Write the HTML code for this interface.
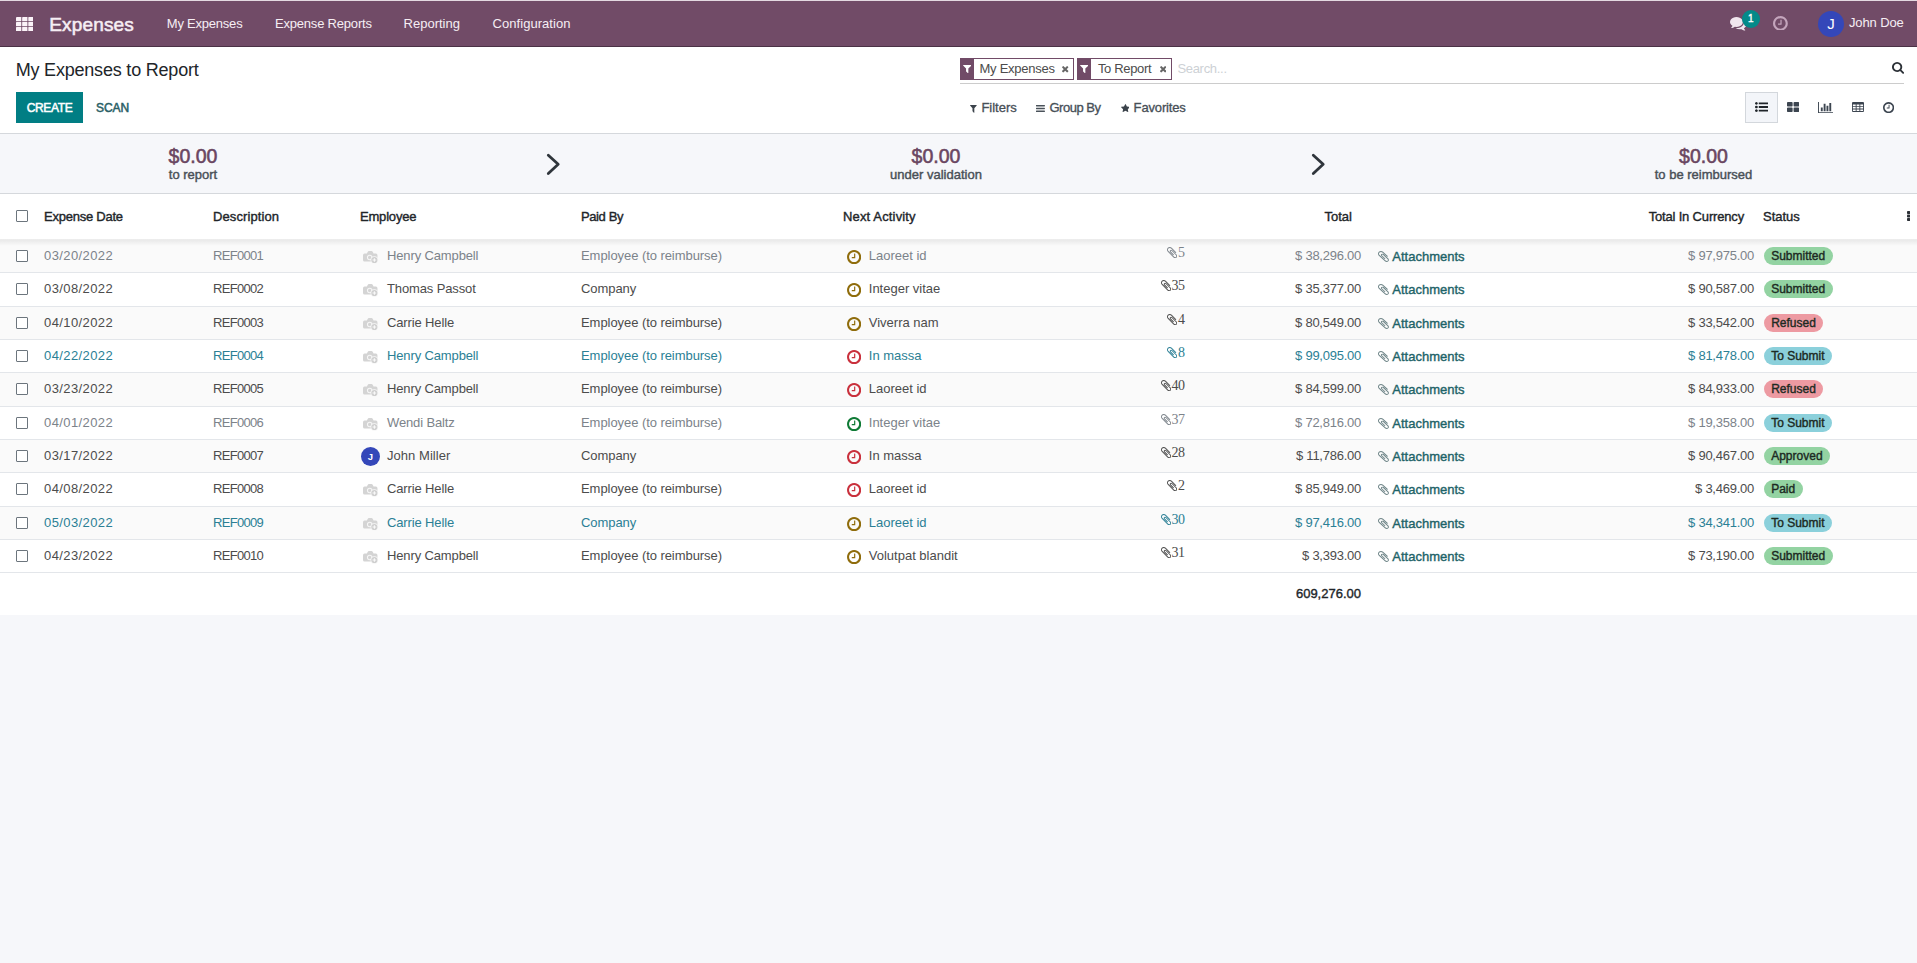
<!DOCTYPE html>
<html lang="en">
<head>
<meta charset="utf-8">
<title>Odoo - My Expenses to Report</title>
<style>
*{box-sizing:border-box;margin:0;padding:0}
html,body{width:1917px;height:963px;overflow:hidden}
body{font-family:"Liberation Sans",sans-serif;font-size:13px;line-height:20px;color:#4c4c4c;background:#f6f7fa;position:relative}
a{text-decoration:none;color:inherit}
.ic{display:inline-block;vertical-align:middle}
b{font-weight:normal}
.md,th,.att,.badge,.lbl,.amt,.opt b,.buttons button,.brand,.f-tot,.nbadge{font-weight:normal;-webkit-text-stroke:.38px currentColor}
.buttons button{-webkit-text-stroke:.5px currentColor}

/* ---------- navbar ---------- */
.navbar{position:absolute;left:0;top:0;width:1917px;height:47px;z-index:2;background:#714b67;box-shadow:inset 0 1px 0 #e4d9e1,inset 0 -1px 0 #4b3246;color:#f6eef4}
.navbar a{position:absolute;white-space:nowrap}
.apps{left:15.7px;top:16.7px;line-height:0}
.brand{left:49.2px;top:12px;font-size:19px;line-height:26px;-webkit-text-stroke:.55px currentColor;letter-spacing:.17px}
.menu a{top:14px;line-height:20px;font-size:13px}
.m1{left:166.8px;letter-spacing:-.22px}.m2{left:275px;letter-spacing:-.2px}.m3{left:403.6px}.m4{left:492.6px;letter-spacing:.04px}
.chat{left:1730px;top:17px;line-height:0}
.nbadge{position:absolute;left:11.7px;top:-7.2px;width:18.4px;height:18.4px;border-radius:9.2px;background:#048a89;color:#fff;font-size:10px;line-height:17.4px;text-align:center}
.act{left:1773.1px;top:15.7px;line-height:0}
.user{left:1818px;top:0;height:46px}
.uav{position:absolute;left:0;top:11px;width:26px;height:26px;border-radius:13px;background:#3447b9;color:#fff;font-size:15px;line-height:26px;text-align:center}
.uname{position:absolute;left:31px;top:13px;line-height:20px;font-size:13px;letter-spacing:-.13px}

/* ---------- control panel ---------- */
.cp{position:absolute;left:0;top:46px;width:1917px;height:88px;background:#fff;border-bottom:1px solid #d5d8dc}
.title{position:absolute;left:15.7px;top:12px;font-size:18px;line-height:24px;font-weight:normal;color:#212529;white-space:nowrap;letter-spacing:-.2px}
.searchbar{position:absolute;left:960px;top:10px;width:944px;height:28px;border-bottom:1px solid #cccccc}
.facet{position:absolute;top:2px;height:22px;border:1px solid #714b67;background:#fff;color:#4c4c4c;white-space:nowrap}
.f1{left:0;width:114px}.f2{left:117.2px;width:94.6px}
.fic{position:absolute;left:-1px;top:-1px;width:13.6px;height:22px;background:#714b67;line-height:0}
.fic svg{position:absolute;left:2.8px;top:7.4px}
.fv{position:absolute;left:18.5px;top:0;line-height:20px;font-size:13px;letter-spacing:-.26px}
.f2 .fv{left:19.7px;letter-spacing:-.34px}
.fx{position:absolute;right:4.5px;top:7.4px}
.ph{position:absolute;left:217.4px;top:3px;line-height:20px;color:#cdd1d5;font-size:13px;letter-spacing:-.3px}
.sico{position:absolute;left:932px;top:6.2px;line-height:0}
.buttons{position:absolute;left:16px;top:46px;white-space:nowrap}
.buttons button{font-family:inherit;font-size:12px;border:0;height:30.6px;line-height:28.6px;padding-top:2px;letter-spacing:-.35px;vertical-align:top;cursor:pointer}
.btn-primary{width:67px;background:#017e84;color:#fff}
.btn-link{margin-left:9.4px;background:none;color:#2a5f66;padding:2px 0 0 0;letter-spacing:-.1px!important}
.options{position:absolute;left:960px;top:51px;height:20px;white-space:nowrap;color:#343a40}
.opt{position:absolute;top:0;line-height:20px;height:20px}
.opt .oi{position:absolute;left:0}
.opt b{position:absolute;top:1px;color:#474f57;font-size:13px;-webkit-text-stroke:.32px currentColor}
.o1{left:10.4px}.o1 .oi{top:7.8px}.o1 b{left:11px}
.o2{left:76.3px}.o2 .oi{top:8px}.o2 b{left:13.2px;letter-spacing:-.5px}
.o3{left:160.6px}.o3 .oi{top:7.3px}.o3 b{left:13px;letter-spacing:-.15px}
.switcher{position:absolute;left:1745px;top:46px;height:31px}
.vb{position:absolute;top:0;width:33px;height:30.6px;line-height:0;border:1px solid transparent}
.vb svg{position:absolute}
.vb.active{background:#f3f5f9;border-color:#d3d7dc}
.v1{left:0}.v1 svg{left:8.9px;top:9.2px}
.v2{left:32px}.v2 svg{left:8.9px;top:9px}
.v3{left:64px}.v3 svg{left:7.8px;top:8.7px}
.v4{left:96px}.v4 svg{left:10px;top:9.2px}
.v5{left:127px}.v5 svg{left:9.9px;top:9px}

/* ---------- dashboard ---------- */
.dash{position:absolute;left:0;top:134px;width:1917px;height:60px;background:#f6f7fa;border-bottom:1px solid #d5d8dc}
.card{position:absolute;top:0;width:300px;text-align:center}
.card span{display:block;white-space:nowrap}
.amt{font-size:19.5px;line-height:24px;margin-top:10px;color:#6a4661;-webkit-text-stroke:.55px currentColor}
.lbl{font-size:13px;line-height:16px;margin-top:-1px;color:#495057;-webkit-text-stroke:.42px currentColor}
.d1{left:43px}.d2{left:786px}.d3{left:1553.5px}
.chev{position:absolute;top:19px}
.ch1{left:546px}.ch2{left:1311px}

/* ---------- list ---------- */
.list{position:absolute;left:0;top:194px;width:1917px;background:#fff}
table{border-collapse:separate;border-spacing:0;table-layout:fixed;width:1917px}
th,td{padding:0 4px;white-space:nowrap;overflow:hidden;text-align:left;vertical-align:middle;font-weight:normal}
thead tr{height:46px}
thead th{height:46px;padding-bottom:1px}
th{color:#212529;font-size:13px}
th.r{text-align:right;padding-right:14px}
th.h-cur{padding-right:15px}
.h-date{letter-spacing:-.24px}.h-ref{letter-spacing:.1px}.h-emp{letter-spacing:-.19px}.h-paid{letter-spacing:-.4px}.h-act{letter-spacing:.15px}.h-cur{letter-spacing:-.17px}
tbody tr{height:33px}
tbody tr:nth-child(3n+2){height:34px}
tbody tr:nth-child(3n+2) td{height:34px}
tbody tr:nth-child(odd){background:#fafafa}
tbody td{height:33px;line-height:20px;padding-top:6px;vertical-align:top;border-bottom:1px solid #e3e6ea}
tr.muted{color:#7c838a}
tr.info{color:#2b7f95}
.c-sel{padding-left:16px}
tbody .c-sel{padding-top:9px}
.cb{display:block;width:12px;height:12px;border:1px solid #6c757d;background:#fff;border-radius:1px;position:relative;top:1px}
thead .cb{top:-1px}
.c-date{letter-spacing:.4px}
.c-ref{letter-spacing:-.68px}
.c-emp{letter-spacing:-.13px}
.c-paid{letter-spacing:-.06px}
.cam{vertical-align:top;margin:5px 8.500px 0 3px}
.av{display:inline-block;vertical-align:top;width:19px;height:19px;border-radius:10px;background:#3447b9;color:#fff;font-size:9.5px;font-weight:bold;line-height:19px;text-align:center;margin:1px 7px 0 1px;letter-spacing:0}
.av+.nm{letter-spacing:.05px}
.nm{vertical-align:baseline}
.aclk{vertical-align:top;margin:3.8px 7.7px 0 3.9px}
.an{vertical-align:baseline}
.c-cnt{text-align:right;padding-right:4.8px;vertical-align:top}
tbody td.c-cnt{padding-top:0}
.cnt{display:inline-block;font-family:"Liberation Serif",serif;font-size:14px;line-height:14px;margin-top:5.6px;color:inherit;letter-spacing:-.7px}
.cnt svg{vertical-align:top;margin-top:1.4px;margin-right:.5px}
.c-tot,.c-cur{text-align:right;padding-right:5px;letter-spacing:-.25px}
.c-att{padding-left:12px}
.attb{display:inline-block;position:relative;top:1px}
.clip2{vertical-align:top;margin:4px 3.4px 0 0}
.att{vertical-align:baseline;color:#1d6368}
.c-st{padding-left:5px}
tbody td.c-st{padding-top:5px}
.badge{display:inline-block;height:18px;line-height:18px;border-radius:9px;padding:0 7.4px 0 7.2px;font-size:12px;color:#1c2a22;vertical-align:middle}
.b-ok{background:#93d3a2}
.b-no{background:#ed9aa2}
.b-info{background:#8bd0db}
.kebab{display:block;margin-left:3px;line-height:0;position:relative;top:-.7px}
tfoot tr{height:42px}
.f-tot{text-align:right;padding-right:5px;color:#212529;letter-spacing:0}
.hshadow{position:absolute;left:0;top:45px;width:1917px;height:7px;background:linear-gradient(to bottom,rgba(0,0,0,.08),rgba(0,0,0,0));pointer-events:none}

</style>
</head>
<body>
<header class="navbar">
  <a class="apps"><svg viewBox="0 0 17.600 14.400" width="17.600" height="14.400"><g fill="#fbf3f8"><rect x="0" y="0" width="5.300" height="4.300" rx=".5"/><rect x="6.15" y="0" width="5.300" height="4.300" rx=".5"/><rect x="12.3" y="0" width="5.300" height="4.300" rx=".5"/><rect x="0" y="5.05" width="5.300" height="4.300" rx=".5"/><rect x="6.15" y="5.05" width="5.300" height="4.300" rx=".5"/><rect x="12.3" y="5.05" width="5.300" height="4.300" rx=".5"/><rect x="0" y="10.1" width="5.300" height="4.300" rx=".5"/><rect x="6.15" y="10.1" width="5.300" height="4.300" rx=".5"/><rect x="12.3" y="10.1" width="5.300" height="4.300" rx=".5"/></g></svg></a>
  <a class="brand">Expenses</a>
  <nav class="menu">
    <a class="m1">My Expenses</a>
    <a class="m2">Expense Reports</a>
    <a class="m3">Reporting</a>
    <a class="m4">Configuration</a>
  </nav>
  <div class="systray">
    <a class="chat"><svg class="ic" viewBox="0 256 1792 1408.11" width="16.4" height="13.60" preserveAspectRatio="none"><path fill="#f1e6ee" d="M1408 768q0 139-94 257t-256.500 186.500-353.500 68.500q-86 0-176-16-124 88-278 128-36 9-86 16h-3q-11 0-20.500-8t-11.500-21q-1-3-1-6.500t.5-6.500 2-6l2.500-5t3.500-5.500 4-5 4.500-5 4-4.500q5-6 23-25t26-29.500 22.500-29 25-38.500 20.500-44q-124-72-195-177t-71-224q0-139 94-257t256.500-186.500 353.500-68.500 353.500 68.500 256.500 186.500 94 257zm384 256q0 120-71 224.500t-195 176.500q10 24 20.500 44t25 38.500 22.500 29 26 29.500 23 25q1 1 4 4.500t4.500 5 4 5 3.500 5.500l2.500 5t2 6 .5 6.500-1 6.500q-3 14-13 22t-22 7q-50-7-86-16-154-40-278-128-90 16-176 16-271 0-472-132 58 4 88 4 161 0 309-45t264-129q125-92 192-212t67-254q0-77-23-152 129 71 204 178t75 230z"/></svg><span class="nbadge">1</span></a>
    <a class="act"><svg class="ic" viewBox="128 128 1536 1536" width="14.8" height="14.80" preserveAspectRatio="none"><path fill="#c4a5bc" d="M1024 544v448q0 14-9 23t-23 9h-320q-14 0-23-9t-9-23v-64q0-14 9-23t23-9h224v-352q0-14 9-23t23-9h64q14 0 23 9t9 23zm416 352q0-148-73-273t-198-198-273-73-273 73-198 198-73 273 73 273 198 198 273 73 273-73 198-198 73-273zm224 0q0 209-103 385.500t-279.500 279.500-385.500 103-385.500-103-279.500-279.500-103-385.500 103-385.500 279.500-279.500 385.500-103 385.500 103 279.500 279.500 103 385.500z"/></svg></a>
    <a class="user"><span class="uav">J</span><span class="uname">John Doe</span></a>
  </div>
</header>

<section class="cp">
  <h1 class="title">My Expenses to Report</h1>
  <div class="searchbar">
    <div class="facet f1"><span class="fic"><svg class="ic" viewBox="190.979 256 1410.04 1408" width="8.4" height="8.00" preserveAspectRatio="none"><path fill="#ffffff" d="M1595 295q17 41-14 70l-493 493v742q0 42-39 59-13 5-25 5-27 0-45-19l-256-256q-19-19-19-45v-486l-493-493q-31-29-14-70 17-39 59-39h1280q42 0 59 39z"/></svg></span><span class="fv">My Expenses</span><svg class="fx" viewBox="302 366 1188 1188" width="6.4" height="6.40" preserveAspectRatio="none"><path fill="#666666" d="M1490 1322q0 40-28 68l-136 136q-28 28-68 28t-68-28l-294-294-294 294q-28 28-68 28t-68-28l-136-136q-28-28-28-68t28-68l294-294-294-294q-28-28-28-68t28-68l136-136q28-28 68-28t68 28l294 294 294-294q28-28 68-28t68 28l136 136q28 28 28 68t-28 68l-294 294 294 294q28 28 28 68z"/></svg></div>
    <div class="facet f2"><span class="fic"><svg class="ic" viewBox="190.979 256 1410.04 1408" width="8.4" height="8.00" preserveAspectRatio="none"><path fill="#ffffff" d="M1595 295q17 41-14 70l-493 493v742q0 42-39 59-13 5-25 5-27 0-45-19l-256-256q-19-19-19-45v-486l-493-493q-31-29-14-70 17-39 59-39h1280q42 0 59 39z"/></svg></span><span class="fv">To Report</span><svg class="fx" viewBox="302 366 1188 1188" width="6.4" height="6.40" preserveAspectRatio="none"><path fill="#666666" d="M1490 1322q0 40-28 68l-136 136q-28 28-68 28t-68-28l-294-294-294 294q-28 28-68 28t-68-28l-136-136q-28-28-28-68t28-68l294-294-294-294q-28-28-28-68t28-68l136-136q28-28 68-28t68 28l294 294 294-294q28-28 68-28t68 28l136 136q28 28 28 68t-28 68l-294 294 294 294q28 28 28 68z"/></svg></div>
    <span class="ph">Search...</span>
    <span class="sico"><svg class="ic" viewBox="64 128 1664 1664" width="12.1" height="11.80" preserveAspectRatio="none"><path fill="#2b3036" d="M1216 832q0-185-131.500-316.500t-316.500-131.500-316.500 131.500-131.500 316.500 131.500 316.500 316.500 131.500 316.500-131.500 131.500-316.500zm512 832q0 52-38 90t-90 38q-54 0-90-38l-343-342q-179 124-399 124-143 0-273.500-55.500t-225-150-150-225-55.500-273.500 55.500-273.500 150-225 225-150 273.500-55.500 273.500 55.500 225 150 150 225 55.500 273.500q0 220-124 399l343 343q37 37 37 90z"/></svg></span>
  </div>
  <div class="buttons">
    <button class="btn-primary">CREATE</button>
    <button class="btn-link">SCAN</button>
  </div>
  <div class="options">
    <span class="opt o1"><svg class="oi" viewBox="190.979 256 1410.04 1408" width="6.8" height="7.80" preserveAspectRatio="none"><path fill="#3b434b" d="M1595 295q17 41-14 70l-493 493v742q0 42-39 59-13 5-25 5-27 0-45-19l-256-256q-19-19-19-45v-486l-493-493q-31-29-14-70 17-39 59-39h1280q42 0 59 39z"/></svg><b>Filters</b></span>
    <span class="opt o2"><svg class="oi" viewBox="128 256 1536 1280" width="8.9" height="7.00" preserveAspectRatio="none"><path fill="#4a525a" d="M1664 1344v128q0 26-19 45t-45 19h-1408q-26 0-45-19t-19-45v-128q0-26 19-45t45-19h1408q26 0 45 19t19 45zm0-512v128q0 26-19 45t-45 19h-1408q-26 0-45-19t-19-45v-128q0-26 19-45t45-19h1408q26 0 45 19t19 45zm0-512v128q0 26-19 45t-45 19h-1408q-26 0-45-19t-19-45v-128q0-26 19-45t45-19h1408q26 0 45 19t19 45z"/></svg><b>Group By</b></span>
    <span class="opt o3"><svg class="oi" viewBox="64 32 1664 1587" width="8.9" height="8.00" preserveAspectRatio="none"><path fill="#3b434b" d="M1728 647q0 22-26 48l-363 354 86 500q1 7 1 20 0 21-10.500 35.500t-30.500 14.500q-19 0-40-12l-449-236-449 236q-22 12-40 12-21 0-31.500-14.500t-10.500-35.500q0-6 2-20l86-500-364-354q-25-27-25-48 0-37 56-46l502-73 225-455q19-41 49-41t49 41l225 455 502 73q56 9 56 46z"/></svg><b>Favorites</b></span>
  </div>
  <div class="switcher">
    <span class="vb active v1"><svg class="ic" viewBox="0 192 1792 1408" width="13.1" height="10.00" preserveAspectRatio="none"><path fill="#1f2429" d="M384 1408q0 80-56 136t-136 56-136-56-56-136 56-136 136-56 136 56 56 136zm0-512q0 80-56 136t-136 56-136-56-56-136 56-136 136-56 136 56 56 136zm1408 416v192q0 13-9.500 22.500t-22.500 9.500h-1216q-13 0-22.500-9.500t-9.500-22.500v-192q0-13 9.500-22.500t22.500-9.500h1216q13 0 22.500 9.500t9.500 22.500zm-1408-928q0 80-56 136t-136 56-136-56-56-136 56-136 136-56 136 56 56 136zm1408 416v192q0 13-9.500 22.500t-22.500 9.500h-1216q-13 0-22.500-9.500t-9.500-22.500v-192q0-13 9.500-22.500t22.500-9.500h1216q13 0 22.500 9.500t9.500 22.500zm0-512v192q0 13-9.500 22.500t-22.500 9.500h-1216q-13 0-22.500-9.500t-9.500-22.500v-192q0-13 9.500-22.500t22.500-9.500h1216q13 0 22.500 9.500t9.500 22.500z"/></svg></span>
    <span class="vb v2"><svg class="ic" viewBox="64 128 1664 1408" width="12.2" height="10.10" preserveAspectRatio="none"><path fill="#3c4550" d="M832 1024v384q0 52-38 90t-90 38h-512q-52 0-90-38t-38-90v-384q0-52 38-90t90-38h512q52 0 90 38t38 90zm0-768v384q0 52-38 90t-90 38h-512q-52 0-90-38t-38-90v-384q0-52 38-90t90-38h512q52 0 90 38t38 90zm896 768v384q0 52-38 90t-90 38h-512q-52 0-90-38t-38-90v-384q0-52 38-90t90-38h512q52 0 90 38t38 90zm0-768v384q0 52-38 90t-90 38h-512q-52 0-90-38t-38-90v-384q0-52 38-90t90-38h512q52 0 90 38t38 90z"/></svg></span>
    <span class="vb v3"><svg class="ic" viewBox="0 128 2048 1536" width="15.1" height="11.20" preserveAspectRatio="none"><path fill="#3c4550" d="M640 896v512h-256v-512h256zm384-512v1024h-256v-1024h256zm1024 1152v128h-2048v-1536h128v1408h1920zm-640-896v768h-256v-768h256zm384-384v1152h-256v-1152h256z"/></svg></span>
    <span class="vb v4"><svg class="ic" viewBox="0 0 12 10" width="12" height="10"><path fill="#3c4550" fill-rule="evenodd" d="M1 0h10q1 0 1 1v8q0 1-1 1H1q-1 0-1-1V1q0-1 1-1zM.9 2.600v1.600h2.800V2.600zm3.700 0v1.600h2.800V2.600zm3.700 0v1.600h2.800V2.600zM.9 5v1.600h2.800V5zm3.700 0v1.600h2.800V5zm3.700 0v1.600h2.800V5zM.9 7.400V9h2.800V7.400zm3.700 0V9h2.800V7.400zm3.700 0V9h2.800V7.400z"/></svg></span>
    <span class="vb v5"><svg class="ic" viewBox="128 128 1536 1536" width="11.2" height="11.20" preserveAspectRatio="none"><path fill="#3c4550" d="M1024 544v448q0 14-9 23t-23 9h-320q-14 0-23-9t-9-23v-64q0-14 9-23t23-9h224v-352q0-14 9-23t23-9h64q14 0 23 9t9 23zm416 352q0-148-73-273t-198-198-273-73-273 73-198 198-73 273 73 273 198 198 273 73 273-73 198-198 73-273zm224 0q0 209-103 385.500t-279.500 279.500-385.500 103-385.500-103-279.500-279.500-103-385.500 103-385.500 279.500-279.500 385.500-103 385.500 103 279.500 279.500 103 385.500z"/></svg></span>
  </div>
</section>

<section class="dash">
  <div class="card d1"><span class="amt">$0.00</span><span class="lbl">to report</span></div>
  <svg class="chev ch1" viewBox="0 0 15 23" width="15" height="23"><path d="M2.300 2.200 12.200 11.300 2.300 20.500" fill="none" stroke="#2f353b" stroke-width="2.800" stroke-linecap="round" stroke-linejoin="round"/></svg>
  <div class="card d2"><span class="amt">$0.00</span><span class="lbl">under validation</span></div>
  <svg class="chev ch2" viewBox="0 0 15 23" width="15" height="23"><path d="M2.300 2.200 12.200 11.300 2.300 20.500" fill="none" stroke="#2f353b" stroke-width="2.800" stroke-linecap="round" stroke-linejoin="round"/></svg>
  <div class="card d3"><span class="amt">$0.00</span><span class="lbl">to be reimbursed</span></div>
</section>

<main class="list">
<table>
<colgroup>
<col style="width:40px"><col style="width:169px"><col style="width:147px"><col style="width:221px"><col style="width:262px"><col style="width:218px"><col style="width:132px"><col style="width:177px"><col style="width:192px"><col style="width:201px"><col style="width:141px"><col style="width:17px">
</colgroup>
<thead>
<tr>
<th class="c-sel"><span class="cb"></span></th>
<th class="h-date">Expense Date</th>
<th class="h-ref">Description</th>
<th class="h-emp">Employee</th>
<th class="h-paid">Paid By</th>
<th class="h-act" colspan="2">Next Activity</th>
<th class="h-tot r">Total</th>
<th></th>
<th class="h-cur r">Total In Currency</th>
<th class="h-st">Status</th>
<th class="h-opt"><span class="kebab"><svg viewBox="0 0 3.200 10" width="3.200" height="10"><g fill="#2c3036"><rect x="0" y="0" width="3.200" height="3" rx=".8"/><rect x="0" y="3.500" width="3.200" height="3" rx=".8"/><rect x="0" y="7" width="3.200" height="3" rx=".8"/></g></svg></span></th>
</tr>
</thead>
<tbody>
<tr class="muted">
<td class="c-sel"><span class="cb"></span></td>
<td class="c-date">03/20/2022</td>
<td class="c-ref">REF0001</td>
<td class="c-emp"><svg class="cam" viewBox="0 0 30 25" width="15.500" height="12.900"><path fill="#d4d4d4" d="M3 5h4.500l1.800-3.600Q10 0 11.500 0h5Q18 0 18.700 1.400L20.500 5H25q3 0 3 3v12.500H3q-3 0-3-3V8q0-3 3-3z"/><circle cx="13" cy="12.500" r="4.400" fill="none" stroke="#f6f6f6" stroke-width="2"/><circle cx="22" cy="17.500" r="7.500" fill="#f8f8f8"/><circle cx="22" cy="17.500" r="6" fill="#cfcfcf"/><path d="M22 14v7M18.500 17.500h7" stroke="#fff" stroke-width="1.700"/></svg><span class="nm">Henry Campbell</span></td>
<td class="c-paid">Employee (to reimburse)</td>
<td class="c-act"><svg class="aclk" viewBox="128 128 1536 1536" width="14.2" height="14.20" preserveAspectRatio="none"><path fill="#8f6c0b" d="M1024 544v448q0 14-9 23t-23 9h-320q-14 0-23-9t-9-23v-64q0-14 9-23t23-9h224v-352q0-14 9-23t23-9h64q14 0 23 9t9 23zm416 352q0-148-73-273t-198-198-273-73-273 73-198 198-73 273 73 273 198 198 273 73 273-73 198-198 73-273zm224 0q0 209-103 385.500t-279.500 279.500-385.500 103-385.500-103-279.500-279.500-103-385.500 103-385.500 279.500-279.500 385.500-103 385.500 103 279.500 279.500 103 385.500z"/></svg><span class="an">Laoreet id</span></td>
<td class="c-cnt"><span class="cnt"><svg class="clip1" viewBox="196 132 1400 1528" width="10.2" height="11.20" preserveAspectRatio="none"><path fill="currentColor" d="M1596 1385q0 117-79 196t-196 79q-135 0-235-100l-777-776q-113-115-113-271 0-159 110-270t269-111q158 0 273 113l605 606q10 10 10 22 0 16-30.500 46.500t-46.500 30.500q-13 0-23-10l-606-607q-79-77-181-77-106 0-179 75t-73 181q0 105 76 181l776 777q63 63 145 63 64 0 106-42t42-106q0-82-63-145l-581-581q-26-24-60-24-29 0-48 19t-19 48q0 32 25 59l410 410q10 10 10 22 0 16-31 47t-47 31q-12 0-22-10l-410-410q-63-61-63-149 0-82 57-139t139-57q88 0 149 63l581 581q100 98 100 235z"/></svg><span class="num">5</span></span></td>
<td class="c-tot">$ 38,296.00</td>
<td class="c-att"><span class="attb"><svg class="clip2" viewBox="196 132 1400 1528" width="10.9" height="10.90" preserveAspectRatio="none"><path fill="#6f8588" d="M1596 1385q0 117-79 196t-196 79q-135 0-235-100l-777-776q-113-115-113-271 0-159 110-270t269-111q158 0 273 113l605 606q10 10 10 22 0 16-30.500 46.500t-46.500 30.500q-13 0-23-10l-606-607q-79-77-181-77-106 0-179 75t-73 181q0 105 76 181l776 777q63 63 145 63 64 0 106-42t42-106q0-82-63-145l-581-581q-26-24-60-24-29 0-48 19t-19 48q0 32 25 59l410 410q10 10 10 22 0 16-31 47t-47 31q-12 0-22-10l-410-410q-63-61-63-149 0-82 57-139t139-57q88 0 149 63l581 581q100 98 100 235z"/></svg><span class="att">Attachments</span></span></td>
<td class="c-cur">$ 97,975.00</td>
<td class="c-st"><span class="badge b-ok">Submitted</span></td>
<td class="c-opt"></td>
</tr>
<tr>
<td class="c-sel"><span class="cb"></span></td>
<td class="c-date">03/08/2022</td>
<td class="c-ref">REF0002</td>
<td class="c-emp"><svg class="cam" viewBox="0 0 30 25" width="15.500" height="12.900"><path fill="#d4d4d4" d="M3 5h4.500l1.800-3.600Q10 0 11.500 0h5Q18 0 18.700 1.400L20.500 5H25q3 0 3 3v12.500H3q-3 0-3-3V8q0-3 3-3z"/><circle cx="13" cy="12.500" r="4.400" fill="none" stroke="#f6f6f6" stroke-width="2"/><circle cx="22" cy="17.500" r="7.500" fill="#f8f8f8"/><circle cx="22" cy="17.500" r="6" fill="#cfcfcf"/><path d="M22 14v7M18.500 17.500h7" stroke="#fff" stroke-width="1.700"/></svg><span class="nm">Thomas Passot</span></td>
<td class="c-paid">Company</td>
<td class="c-act"><svg class="aclk" viewBox="128 128 1536 1536" width="14.2" height="14.20" preserveAspectRatio="none"><path fill="#8f6c0b" d="M1024 544v448q0 14-9 23t-23 9h-320q-14 0-23-9t-9-23v-64q0-14 9-23t23-9h224v-352q0-14 9-23t23-9h64q14 0 23 9t9 23zm416 352q0-148-73-273t-198-198-273-73-273 73-198 198-73 273 73 273 198 198 273 73 273-73 198-198 73-273zm224 0q0 209-103 385.500t-279.500 279.500-385.500 103-385.500-103-279.500-279.500-103-385.500 103-385.500 279.500-279.500 385.500-103 385.500 103 279.500 279.500 103 385.500z"/></svg><span class="an">Integer vitae</span></td>
<td class="c-cnt"><span class="cnt"><svg class="clip1" viewBox="196 132 1400 1528" width="10.2" height="11.20" preserveAspectRatio="none"><path fill="currentColor" d="M1596 1385q0 117-79 196t-196 79q-135 0-235-100l-777-776q-113-115-113-271 0-159 110-270t269-111q158 0 273 113l605 606q10 10 10 22 0 16-30.500 46.500t-46.500 30.500q-13 0-23-10l-606-607q-79-77-181-77-106 0-179 75t-73 181q0 105 76 181l776 777q63 63 145 63 64 0 106-42t42-106q0-82-63-145l-581-581q-26-24-60-24-29 0-48 19t-19 48q0 32 25 59l410 410q10 10 10 22 0 16-31 47t-47 31q-12 0-22-10l-410-410q-63-61-63-149 0-82 57-139t139-57q88 0 149 63l581 581q100 98 100 235z"/></svg><span class="num">35</span></span></td>
<td class="c-tot">$ 35,377.00</td>
<td class="c-att"><span class="attb"><svg class="clip2" viewBox="196 132 1400 1528" width="10.9" height="10.90" preserveAspectRatio="none"><path fill="#6f8588" d="M1596 1385q0 117-79 196t-196 79q-135 0-235-100l-777-776q-113-115-113-271 0-159 110-270t269-111q158 0 273 113l605 606q10 10 10 22 0 16-30.500 46.500t-46.500 30.500q-13 0-23-10l-606-607q-79-77-181-77-106 0-179 75t-73 181q0 105 76 181l776 777q63 63 145 63 64 0 106-42t42-106q0-82-63-145l-581-581q-26-24-60-24-29 0-48 19t-19 48q0 32 25 59l410 410q10 10 10 22 0 16-31 47t-47 31q-12 0-22-10l-410-410q-63-61-63-149 0-82 57-139t139-57q88 0 149 63l581 581q100 98 100 235z"/></svg><span class="att">Attachments</span></span></td>
<td class="c-cur">$ 90,587.00</td>
<td class="c-st"><span class="badge b-ok">Submitted</span></td>
<td class="c-opt"></td>
</tr>
<tr>
<td class="c-sel"><span class="cb"></span></td>
<td class="c-date">04/10/2022</td>
<td class="c-ref">REF0003</td>
<td class="c-emp"><svg class="cam" viewBox="0 0 30 25" width="15.500" height="12.900"><path fill="#d4d4d4" d="M3 5h4.500l1.800-3.600Q10 0 11.500 0h5Q18 0 18.700 1.400L20.500 5H25q3 0 3 3v12.500H3q-3 0-3-3V8q0-3 3-3z"/><circle cx="13" cy="12.500" r="4.400" fill="none" stroke="#f6f6f6" stroke-width="2"/><circle cx="22" cy="17.500" r="7.500" fill="#f8f8f8"/><circle cx="22" cy="17.500" r="6" fill="#cfcfcf"/><path d="M22 14v7M18.500 17.500h7" stroke="#fff" stroke-width="1.700"/></svg><span class="nm">Carrie Helle</span></td>
<td class="c-paid">Employee (to reimburse)</td>
<td class="c-act"><svg class="aclk" viewBox="128 128 1536 1536" width="14.2" height="14.20" preserveAspectRatio="none"><path fill="#8f6c0b" d="M1024 544v448q0 14-9 23t-23 9h-320q-14 0-23-9t-9-23v-64q0-14 9-23t23-9h224v-352q0-14 9-23t23-9h64q14 0 23 9t9 23zm416 352q0-148-73-273t-198-198-273-73-273 73-198 198-73 273 73 273 198 198 273 73 273-73 198-198 73-273zm224 0q0 209-103 385.500t-279.500 279.500-385.500 103-385.500-103-279.500-279.500-103-385.500 103-385.500 279.500-279.500 385.500-103 385.500 103 279.500 279.500 103 385.500z"/></svg><span class="an">Viverra nam</span></td>
<td class="c-cnt"><span class="cnt"><svg class="clip1" viewBox="196 132 1400 1528" width="10.2" height="11.20" preserveAspectRatio="none"><path fill="currentColor" d="M1596 1385q0 117-79 196t-196 79q-135 0-235-100l-777-776q-113-115-113-271 0-159 110-270t269-111q158 0 273 113l605 606q10 10 10 22 0 16-30.500 46.500t-46.500 30.500q-13 0-23-10l-606-607q-79-77-181-77-106 0-179 75t-73 181q0 105 76 181l776 777q63 63 145 63 64 0 106-42t42-106q0-82-63-145l-581-581q-26-24-60-24-29 0-48 19t-19 48q0 32 25 59l410 410q10 10 10 22 0 16-31 47t-47 31q-12 0-22-10l-410-410q-63-61-63-149 0-82 57-139t139-57q88 0 149 63l581 581q100 98 100 235z"/></svg><span class="num">4</span></span></td>
<td class="c-tot">$ 80,549.00</td>
<td class="c-att"><span class="attb"><svg class="clip2" viewBox="196 132 1400 1528" width="10.9" height="10.90" preserveAspectRatio="none"><path fill="#6f8588" d="M1596 1385q0 117-79 196t-196 79q-135 0-235-100l-777-776q-113-115-113-271 0-159 110-270t269-111q158 0 273 113l605 606q10 10 10 22 0 16-30.500 46.500t-46.500 30.500q-13 0-23-10l-606-607q-79-77-181-77-106 0-179 75t-73 181q0 105 76 181l776 777q63 63 145 63 64 0 106-42t42-106q0-82-63-145l-581-581q-26-24-60-24-29 0-48 19t-19 48q0 32 25 59l410 410q10 10 10 22 0 16-31 47t-47 31q-12 0-22-10l-410-410q-63-61-63-149 0-82 57-139t139-57q88 0 149 63l581 581q100 98 100 235z"/></svg><span class="att">Attachments</span></span></td>
<td class="c-cur">$ 33,542.00</td>
<td class="c-st"><span class="badge b-no">Refused</span></td>
<td class="c-opt"></td>
</tr>
<tr class="info">
<td class="c-sel"><span class="cb"></span></td>
<td class="c-date">04/22/2022</td>
<td class="c-ref">REF0004</td>
<td class="c-emp"><svg class="cam" viewBox="0 0 30 25" width="15.500" height="12.900"><path fill="#d4d4d4" d="M3 5h4.500l1.800-3.600Q10 0 11.500 0h5Q18 0 18.700 1.400L20.500 5H25q3 0 3 3v12.500H3q-3 0-3-3V8q0-3 3-3z"/><circle cx="13" cy="12.500" r="4.400" fill="none" stroke="#f6f6f6" stroke-width="2"/><circle cx="22" cy="17.500" r="7.500" fill="#f8f8f8"/><circle cx="22" cy="17.500" r="6" fill="#cfcfcf"/><path d="M22 14v7M18.500 17.500h7" stroke="#fff" stroke-width="1.700"/></svg><span class="nm">Henry Campbell</span></td>
<td class="c-paid">Employee (to reimburse)</td>
<td class="c-act"><svg class="aclk" viewBox="128 128 1536 1536" width="14.2" height="14.20" preserveAspectRatio="none"><path fill="#c9303c" d="M1024 544v448q0 14-9 23t-23 9h-320q-14 0-23-9t-9-23v-64q0-14 9-23t23-9h224v-352q0-14 9-23t23-9h64q14 0 23 9t9 23zm416 352q0-148-73-273t-198-198-273-73-273 73-198 198-73 273 73 273 198 198 273 73 273-73 198-198 73-273zm224 0q0 209-103 385.500t-279.500 279.500-385.500 103-385.500-103-279.500-279.500-103-385.500 103-385.500 279.500-279.500 385.500-103 385.500 103 279.500 279.500 103 385.500z"/></svg><span class="an">In massa</span></td>
<td class="c-cnt"><span class="cnt"><svg class="clip1" viewBox="196 132 1400 1528" width="10.2" height="11.20" preserveAspectRatio="none"><path fill="currentColor" d="M1596 1385q0 117-79 196t-196 79q-135 0-235-100l-777-776q-113-115-113-271 0-159 110-270t269-111q158 0 273 113l605 606q10 10 10 22 0 16-30.500 46.500t-46.500 30.500q-13 0-23-10l-606-607q-79-77-181-77-106 0-179 75t-73 181q0 105 76 181l776 777q63 63 145 63 64 0 106-42t42-106q0-82-63-145l-581-581q-26-24-60-24-29 0-48 19t-19 48q0 32 25 59l410 410q10 10 10 22 0 16-31 47t-47 31q-12 0-22-10l-410-410q-63-61-63-149 0-82 57-139t139-57q88 0 149 63l581 581q100 98 100 235z"/></svg><span class="num">8</span></span></td>
<td class="c-tot">$ 99,095.00</td>
<td class="c-att"><span class="attb"><svg class="clip2" viewBox="196 132 1400 1528" width="10.9" height="10.90" preserveAspectRatio="none"><path fill="#6f8588" d="M1596 1385q0 117-79 196t-196 79q-135 0-235-100l-777-776q-113-115-113-271 0-159 110-270t269-111q158 0 273 113l605 606q10 10 10 22 0 16-30.500 46.500t-46.500 30.500q-13 0-23-10l-606-607q-79-77-181-77-106 0-179 75t-73 181q0 105 76 181l776 777q63 63 145 63 64 0 106-42t42-106q0-82-63-145l-581-581q-26-24-60-24-29 0-48 19t-19 48q0 32 25 59l410 410q10 10 10 22 0 16-31 47t-47 31q-12 0-22-10l-410-410q-63-61-63-149 0-82 57-139t139-57q88 0 149 63l581 581q100 98 100 235z"/></svg><span class="att">Attachments</span></span></td>
<td class="c-cur">$ 81,478.00</td>
<td class="c-st"><span class="badge b-info">To Submit</span></td>
<td class="c-opt"></td>
</tr>
<tr>
<td class="c-sel"><span class="cb"></span></td>
<td class="c-date">03/23/2022</td>
<td class="c-ref">REF0005</td>
<td class="c-emp"><svg class="cam" viewBox="0 0 30 25" width="15.500" height="12.900"><path fill="#d4d4d4" d="M3 5h4.500l1.800-3.600Q10 0 11.500 0h5Q18 0 18.700 1.400L20.500 5H25q3 0 3 3v12.500H3q-3 0-3-3V8q0-3 3-3z"/><circle cx="13" cy="12.500" r="4.400" fill="none" stroke="#f6f6f6" stroke-width="2"/><circle cx="22" cy="17.500" r="7.500" fill="#f8f8f8"/><circle cx="22" cy="17.500" r="6" fill="#cfcfcf"/><path d="M22 14v7M18.500 17.500h7" stroke="#fff" stroke-width="1.700"/></svg><span class="nm">Henry Campbell</span></td>
<td class="c-paid">Employee (to reimburse)</td>
<td class="c-act"><svg class="aclk" viewBox="128 128 1536 1536" width="14.2" height="14.20" preserveAspectRatio="none"><path fill="#c9303c" d="M1024 544v448q0 14-9 23t-23 9h-320q-14 0-23-9t-9-23v-64q0-14 9-23t23-9h224v-352q0-14 9-23t23-9h64q14 0 23 9t9 23zm416 352q0-148-73-273t-198-198-273-73-273 73-198 198-73 273 73 273 198 198 273 73 273-73 198-198 73-273zm224 0q0 209-103 385.500t-279.500 279.500-385.500 103-385.500-103-279.500-279.500-103-385.500 103-385.500 279.500-279.500 385.500-103 385.500 103 279.500 279.500 103 385.500z"/></svg><span class="an">Laoreet id</span></td>
<td class="c-cnt"><span class="cnt"><svg class="clip1" viewBox="196 132 1400 1528" width="10.2" height="11.20" preserveAspectRatio="none"><path fill="currentColor" d="M1596 1385q0 117-79 196t-196 79q-135 0-235-100l-777-776q-113-115-113-271 0-159 110-270t269-111q158 0 273 113l605 606q10 10 10 22 0 16-30.500 46.500t-46.500 30.500q-13 0-23-10l-606-607q-79-77-181-77-106 0-179 75t-73 181q0 105 76 181l776 777q63 63 145 63 64 0 106-42t42-106q0-82-63-145l-581-581q-26-24-60-24-29 0-48 19t-19 48q0 32 25 59l410 410q10 10 10 22 0 16-31 47t-47 31q-12 0-22-10l-410-410q-63-61-63-149 0-82 57-139t139-57q88 0 149 63l581 581q100 98 100 235z"/></svg><span class="num">40</span></span></td>
<td class="c-tot">$ 84,599.00</td>
<td class="c-att"><span class="attb"><svg class="clip2" viewBox="196 132 1400 1528" width="10.9" height="10.90" preserveAspectRatio="none"><path fill="#6f8588" d="M1596 1385q0 117-79 196t-196 79q-135 0-235-100l-777-776q-113-115-113-271 0-159 110-270t269-111q158 0 273 113l605 606q10 10 10 22 0 16-30.500 46.500t-46.500 30.500q-13 0-23-10l-606-607q-79-77-181-77-106 0-179 75t-73 181q0 105 76 181l776 777q63 63 145 63 64 0 106-42t42-106q0-82-63-145l-581-581q-26-24-60-24-29 0-48 19t-19 48q0 32 25 59l410 410q10 10 10 22 0 16-31 47t-47 31q-12 0-22-10l-410-410q-63-61-63-149 0-82 57-139t139-57q88 0 149 63l581 581q100 98 100 235z"/></svg><span class="att">Attachments</span></span></td>
<td class="c-cur">$ 84,933.00</td>
<td class="c-st"><span class="badge b-no">Refused</span></td>
<td class="c-opt"></td>
</tr>
<tr class="muted">
<td class="c-sel"><span class="cb"></span></td>
<td class="c-date">04/01/2022</td>
<td class="c-ref">REF0006</td>
<td class="c-emp"><svg class="cam" viewBox="0 0 30 25" width="15.500" height="12.900"><path fill="#d4d4d4" d="M3 5h4.500l1.800-3.600Q10 0 11.500 0h5Q18 0 18.700 1.400L20.500 5H25q3 0 3 3v12.500H3q-3 0-3-3V8q0-3 3-3z"/><circle cx="13" cy="12.500" r="4.400" fill="none" stroke="#f6f6f6" stroke-width="2"/><circle cx="22" cy="17.500" r="7.500" fill="#f8f8f8"/><circle cx="22" cy="17.500" r="6" fill="#cfcfcf"/><path d="M22 14v7M18.500 17.500h7" stroke="#fff" stroke-width="1.700"/></svg><span class="nm">Wendi Baltz</span></td>
<td class="c-paid">Employee (to reimburse)</td>
<td class="c-act"><svg class="aclk" viewBox="128 128 1536 1536" width="14.2" height="14.20" preserveAspectRatio="none"><path fill="#0f7a35" d="M1024 544v448q0 14-9 23t-23 9h-320q-14 0-23-9t-9-23v-64q0-14 9-23t23-9h224v-352q0-14 9-23t23-9h64q14 0 23 9t9 23zm416 352q0-148-73-273t-198-198-273-73-273 73-198 198-73 273 73 273 198 198 273 73 273-73 198-198 73-273zm224 0q0 209-103 385.500t-279.500 279.500-385.500 103-385.500-103-279.500-279.500-103-385.500 103-385.500 279.500-279.500 385.500-103 385.500 103 279.500 279.500 103 385.500z"/></svg><span class="an">Integer vitae</span></td>
<td class="c-cnt"><span class="cnt"><svg class="clip1" viewBox="196 132 1400 1528" width="10.2" height="11.20" preserveAspectRatio="none"><path fill="currentColor" d="M1596 1385q0 117-79 196t-196 79q-135 0-235-100l-777-776q-113-115-113-271 0-159 110-270t269-111q158 0 273 113l605 606q10 10 10 22 0 16-30.500 46.500t-46.500 30.500q-13 0-23-10l-606-607q-79-77-181-77-106 0-179 75t-73 181q0 105 76 181l776 777q63 63 145 63 64 0 106-42t42-106q0-82-63-145l-581-581q-26-24-60-24-29 0-48 19t-19 48q0 32 25 59l410 410q10 10 10 22 0 16-31 47t-47 31q-12 0-22-10l-410-410q-63-61-63-149 0-82 57-139t139-57q88 0 149 63l581 581q100 98 100 235z"/></svg><span class="num">37</span></span></td>
<td class="c-tot">$ 72,816.00</td>
<td class="c-att"><span class="attb"><svg class="clip2" viewBox="196 132 1400 1528" width="10.9" height="10.90" preserveAspectRatio="none"><path fill="#6f8588" d="M1596 1385q0 117-79 196t-196 79q-135 0-235-100l-777-776q-113-115-113-271 0-159 110-270t269-111q158 0 273 113l605 606q10 10 10 22 0 16-30.500 46.500t-46.500 30.500q-13 0-23-10l-606-607q-79-77-181-77-106 0-179 75t-73 181q0 105 76 181l776 777q63 63 145 63 64 0 106-42t42-106q0-82-63-145l-581-581q-26-24-60-24-29 0-48 19t-19 48q0 32 25 59l410 410q10 10 10 22 0 16-31 47t-47 31q-12 0-22-10l-410-410q-63-61-63-149 0-82 57-139t139-57q88 0 149 63l581 581q100 98 100 235z"/></svg><span class="att">Attachments</span></span></td>
<td class="c-cur">$ 19,358.00</td>
<td class="c-st"><span class="badge b-info">To Submit</span></td>
<td class="c-opt"></td>
</tr>
<tr>
<td class="c-sel"><span class="cb"></span></td>
<td class="c-date">03/17/2022</td>
<td class="c-ref">REF0007</td>
<td class="c-emp"><span class="av">J</span><span class="nm">John Miller</span></td>
<td class="c-paid">Company</td>
<td class="c-act"><svg class="aclk" viewBox="128 128 1536 1536" width="14.2" height="14.20" preserveAspectRatio="none"><path fill="#c9303c" d="M1024 544v448q0 14-9 23t-23 9h-320q-14 0-23-9t-9-23v-64q0-14 9-23t23-9h224v-352q0-14 9-23t23-9h64q14 0 23 9t9 23zm416 352q0-148-73-273t-198-198-273-73-273 73-198 198-73 273 73 273 198 198 273 73 273-73 198-198 73-273zm224 0q0 209-103 385.500t-279.500 279.500-385.500 103-385.500-103-279.500-279.500-103-385.500 103-385.500 279.500-279.500 385.500-103 385.500 103 279.500 279.500 103 385.500z"/></svg><span class="an">In massa</span></td>
<td class="c-cnt"><span class="cnt"><svg class="clip1" viewBox="196 132 1400 1528" width="10.2" height="11.20" preserveAspectRatio="none"><path fill="currentColor" d="M1596 1385q0 117-79 196t-196 79q-135 0-235-100l-777-776q-113-115-113-271 0-159 110-270t269-111q158 0 273 113l605 606q10 10 10 22 0 16-30.500 46.500t-46.500 30.500q-13 0-23-10l-606-607q-79-77-181-77-106 0-179 75t-73 181q0 105 76 181l776 777q63 63 145 63 64 0 106-42t42-106q0-82-63-145l-581-581q-26-24-60-24-29 0-48 19t-19 48q0 32 25 59l410 410q10 10 10 22 0 16-31 47t-47 31q-12 0-22-10l-410-410q-63-61-63-149 0-82 57-139t139-57q88 0 149 63l581 581q100 98 100 235z"/></svg><span class="num">28</span></span></td>
<td class="c-tot">$ 11,786.00</td>
<td class="c-att"><span class="attb"><svg class="clip2" viewBox="196 132 1400 1528" width="10.9" height="10.90" preserveAspectRatio="none"><path fill="#6f8588" d="M1596 1385q0 117-79 196t-196 79q-135 0-235-100l-777-776q-113-115-113-271 0-159 110-270t269-111q158 0 273 113l605 606q10 10 10 22 0 16-30.500 46.500t-46.500 30.500q-13 0-23-10l-606-607q-79-77-181-77-106 0-179 75t-73 181q0 105 76 181l776 777q63 63 145 63 64 0 106-42t42-106q0-82-63-145l-581-581q-26-24-60-24-29 0-48 19t-19 48q0 32 25 59l410 410q10 10 10 22 0 16-31 47t-47 31q-12 0-22-10l-410-410q-63-61-63-149 0-82 57-139t139-57q88 0 149 63l581 581q100 98 100 235z"/></svg><span class="att">Attachments</span></span></td>
<td class="c-cur">$ 90,467.00</td>
<td class="c-st"><span class="badge b-ok">Approved</span></td>
<td class="c-opt"></td>
</tr>
<tr>
<td class="c-sel"><span class="cb"></span></td>
<td class="c-date">04/08/2022</td>
<td class="c-ref">REF0008</td>
<td class="c-emp"><svg class="cam" viewBox="0 0 30 25" width="15.500" height="12.900"><path fill="#d4d4d4" d="M3 5h4.500l1.800-3.600Q10 0 11.500 0h5Q18 0 18.700 1.400L20.500 5H25q3 0 3 3v12.500H3q-3 0-3-3V8q0-3 3-3z"/><circle cx="13" cy="12.500" r="4.400" fill="none" stroke="#f6f6f6" stroke-width="2"/><circle cx="22" cy="17.500" r="7.500" fill="#f8f8f8"/><circle cx="22" cy="17.500" r="6" fill="#cfcfcf"/><path d="M22 14v7M18.500 17.500h7" stroke="#fff" stroke-width="1.700"/></svg><span class="nm">Carrie Helle</span></td>
<td class="c-paid">Employee (to reimburse)</td>
<td class="c-act"><svg class="aclk" viewBox="128 128 1536 1536" width="14.2" height="14.20" preserveAspectRatio="none"><path fill="#c9303c" d="M1024 544v448q0 14-9 23t-23 9h-320q-14 0-23-9t-9-23v-64q0-14 9-23t23-9h224v-352q0-14 9-23t23-9h64q14 0 23 9t9 23zm416 352q0-148-73-273t-198-198-273-73-273 73-198 198-73 273 73 273 198 198 273 73 273-73 198-198 73-273zm224 0q0 209-103 385.500t-279.500 279.500-385.500 103-385.500-103-279.500-279.500-103-385.500 103-385.500 279.500-279.500 385.500-103 385.500 103 279.500 279.500 103 385.500z"/></svg><span class="an">Laoreet id</span></td>
<td class="c-cnt"><span class="cnt"><svg class="clip1" viewBox="196 132 1400 1528" width="10.2" height="11.20" preserveAspectRatio="none"><path fill="currentColor" d="M1596 1385q0 117-79 196t-196 79q-135 0-235-100l-777-776q-113-115-113-271 0-159 110-270t269-111q158 0 273 113l605 606q10 10 10 22 0 16-30.500 46.500t-46.500 30.500q-13 0-23-10l-606-607q-79-77-181-77-106 0-179 75t-73 181q0 105 76 181l776 777q63 63 145 63 64 0 106-42t42-106q0-82-63-145l-581-581q-26-24-60-24-29 0-48 19t-19 48q0 32 25 59l410 410q10 10 10 22 0 16-31 47t-47 31q-12 0-22-10l-410-410q-63-61-63-149 0-82 57-139t139-57q88 0 149 63l581 581q100 98 100 235z"/></svg><span class="num">2</span></span></td>
<td class="c-tot">$ 85,949.00</td>
<td class="c-att"><span class="attb"><svg class="clip2" viewBox="196 132 1400 1528" width="10.9" height="10.90" preserveAspectRatio="none"><path fill="#6f8588" d="M1596 1385q0 117-79 196t-196 79q-135 0-235-100l-777-776q-113-115-113-271 0-159 110-270t269-111q158 0 273 113l605 606q10 10 10 22 0 16-30.500 46.500t-46.500 30.500q-13 0-23-10l-606-607q-79-77-181-77-106 0-179 75t-73 181q0 105 76 181l776 777q63 63 145 63 64 0 106-42t42-106q0-82-63-145l-581-581q-26-24-60-24-29 0-48 19t-19 48q0 32 25 59l410 410q10 10 10 22 0 16-31 47t-47 31q-12 0-22-10l-410-410q-63-61-63-149 0-82 57-139t139-57q88 0 149 63l581 581q100 98 100 235z"/></svg><span class="att">Attachments</span></span></td>
<td class="c-cur">$ 3,469.00</td>
<td class="c-st"><span class="badge b-ok">Paid</span></td>
<td class="c-opt"></td>
</tr>
<tr class="info">
<td class="c-sel"><span class="cb"></span></td>
<td class="c-date">05/03/2022</td>
<td class="c-ref">REF0009</td>
<td class="c-emp"><svg class="cam" viewBox="0 0 30 25" width="15.500" height="12.900"><path fill="#d4d4d4" d="M3 5h4.500l1.800-3.600Q10 0 11.500 0h5Q18 0 18.700 1.400L20.500 5H25q3 0 3 3v12.500H3q-3 0-3-3V8q0-3 3-3z"/><circle cx="13" cy="12.500" r="4.400" fill="none" stroke="#f6f6f6" stroke-width="2"/><circle cx="22" cy="17.500" r="7.500" fill="#f8f8f8"/><circle cx="22" cy="17.500" r="6" fill="#cfcfcf"/><path d="M22 14v7M18.500 17.500h7" stroke="#fff" stroke-width="1.700"/></svg><span class="nm">Carrie Helle</span></td>
<td class="c-paid">Company</td>
<td class="c-act"><svg class="aclk" viewBox="128 128 1536 1536" width="14.2" height="14.20" preserveAspectRatio="none"><path fill="#8f6c0b" d="M1024 544v448q0 14-9 23t-23 9h-320q-14 0-23-9t-9-23v-64q0-14 9-23t23-9h224v-352q0-14 9-23t23-9h64q14 0 23 9t9 23zm416 352q0-148-73-273t-198-198-273-73-273 73-198 198-73 273 73 273 198 198 273 73 273-73 198-198 73-273zm224 0q0 209-103 385.500t-279.500 279.500-385.500 103-385.500-103-279.500-279.500-103-385.500 103-385.500 279.500-279.500 385.500-103 385.500 103 279.500 279.500 103 385.500z"/></svg><span class="an">Laoreet id</span></td>
<td class="c-cnt"><span class="cnt"><svg class="clip1" viewBox="196 132 1400 1528" width="10.2" height="11.20" preserveAspectRatio="none"><path fill="currentColor" d="M1596 1385q0 117-79 196t-196 79q-135 0-235-100l-777-776q-113-115-113-271 0-159 110-270t269-111q158 0 273 113l605 606q10 10 10 22 0 16-30.500 46.500t-46.500 30.500q-13 0-23-10l-606-607q-79-77-181-77-106 0-179 75t-73 181q0 105 76 181l776 777q63 63 145 63 64 0 106-42t42-106q0-82-63-145l-581-581q-26-24-60-24-29 0-48 19t-19 48q0 32 25 59l410 410q10 10 10 22 0 16-31 47t-47 31q-12 0-22-10l-410-410q-63-61-63-149 0-82 57-139t139-57q88 0 149 63l581 581q100 98 100 235z"/></svg><span class="num">30</span></span></td>
<td class="c-tot">$ 97,416.00</td>
<td class="c-att"><span class="attb"><svg class="clip2" viewBox="196 132 1400 1528" width="10.9" height="10.90" preserveAspectRatio="none"><path fill="#6f8588" d="M1596 1385q0 117-79 196t-196 79q-135 0-235-100l-777-776q-113-115-113-271 0-159 110-270t269-111q158 0 273 113l605 606q10 10 10 22 0 16-30.500 46.500t-46.500 30.500q-13 0-23-10l-606-607q-79-77-181-77-106 0-179 75t-73 181q0 105 76 181l776 777q63 63 145 63 64 0 106-42t42-106q0-82-63-145l-581-581q-26-24-60-24-29 0-48 19t-19 48q0 32 25 59l410 410q10 10 10 22 0 16-31 47t-47 31q-12 0-22-10l-410-410q-63-61-63-149 0-82 57-139t139-57q88 0 149 63l581 581q100 98 100 235z"/></svg><span class="att">Attachments</span></span></td>
<td class="c-cur">$ 34,341.00</td>
<td class="c-st"><span class="badge b-info">To Submit</span></td>
<td class="c-opt"></td>
</tr>
<tr>
<td class="c-sel"><span class="cb"></span></td>
<td class="c-date">04/23/2022</td>
<td class="c-ref">REF0010</td>
<td class="c-emp"><svg class="cam" viewBox="0 0 30 25" width="15.500" height="12.900"><path fill="#d4d4d4" d="M3 5h4.500l1.800-3.600Q10 0 11.500 0h5Q18 0 18.700 1.400L20.500 5H25q3 0 3 3v12.500H3q-3 0-3-3V8q0-3 3-3z"/><circle cx="13" cy="12.500" r="4.400" fill="none" stroke="#f6f6f6" stroke-width="2"/><circle cx="22" cy="17.500" r="7.500" fill="#f8f8f8"/><circle cx="22" cy="17.500" r="6" fill="#cfcfcf"/><path d="M22 14v7M18.500 17.500h7" stroke="#fff" stroke-width="1.700"/></svg><span class="nm">Henry Campbell</span></td>
<td class="c-paid">Employee (to reimburse)</td>
<td class="c-act"><svg class="aclk" viewBox="128 128 1536 1536" width="14.2" height="14.20" preserveAspectRatio="none"><path fill="#8f6c0b" d="M1024 544v448q0 14-9 23t-23 9h-320q-14 0-23-9t-9-23v-64q0-14 9-23t23-9h224v-352q0-14 9-23t23-9h64q14 0 23 9t9 23zm416 352q0-148-73-273t-198-198-273-73-273 73-198 198-73 273 73 273 198 198 273 73 273-73 198-198 73-273zm224 0q0 209-103 385.500t-279.500 279.500-385.500 103-385.500-103-279.500-279.500-103-385.500 103-385.500 279.500-279.500 385.500-103 385.500 103 279.500 279.500 103 385.500z"/></svg><span class="an">Volutpat blandit</span></td>
<td class="c-cnt"><span class="cnt"><svg class="clip1" viewBox="196 132 1400 1528" width="10.2" height="11.20" preserveAspectRatio="none"><path fill="currentColor" d="M1596 1385q0 117-79 196t-196 79q-135 0-235-100l-777-776q-113-115-113-271 0-159 110-270t269-111q158 0 273 113l605 606q10 10 10 22 0 16-30.500 46.500t-46.500 30.500q-13 0-23-10l-606-607q-79-77-181-77-106 0-179 75t-73 181q0 105 76 181l776 777q63 63 145 63 64 0 106-42t42-106q0-82-63-145l-581-581q-26-24-60-24-29 0-48 19t-19 48q0 32 25 59l410 410q10 10 10 22 0 16-31 47t-47 31q-12 0-22-10l-410-410q-63-61-63-149 0-82 57-139t139-57q88 0 149 63l581 581q100 98 100 235z"/></svg><span class="num">31</span></span></td>
<td class="c-tot">$ 3,393.00</td>
<td class="c-att"><span class="attb"><svg class="clip2" viewBox="196 132 1400 1528" width="10.9" height="10.90" preserveAspectRatio="none"><path fill="#6f8588" d="M1596 1385q0 117-79 196t-196 79q-135 0-235-100l-777-776q-113-115-113-271 0-159 110-270t269-111q158 0 273 113l605 606q10 10 10 22 0 16-30.500 46.500t-46.500 30.500q-13 0-23-10l-606-607q-79-77-181-77-106 0-179 75t-73 181q0 105 76 181l776 777q63 63 145 63 64 0 106-42t42-106q0-82-63-145l-581-581q-26-24-60-24-29 0-48 19t-19 48q0 32 25 59l410 410q10 10 10 22 0 16-31 47t-47 31q-12 0-22-10l-410-410q-63-61-63-149 0-82 57-139t139-57q88 0 149 63l581 581q100 98 100 235z"/></svg><span class="att">Attachments</span></span></td>
<td class="c-cur">$ 73,190.00</td>
<td class="c-st"><span class="badge b-ok">Submitted</span></td>
<td class="c-opt"></td>
</tr>
</tbody>
<tfoot>
<tr><td colspan="7"></td><td class="f-tot">609,276.00</td><td colspan="4"></td></tr>
</tfoot>
</table>
<div class="hshadow"></div>
</main>
</body>
</html>
